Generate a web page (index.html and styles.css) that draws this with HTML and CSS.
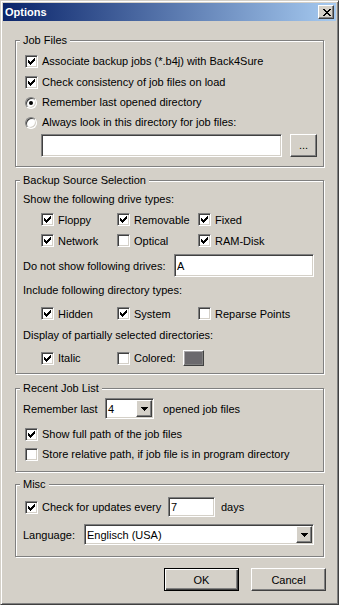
FILE: index.html
```html
<!DOCTYPE html>
<html lang="en">
<head>
    <meta charset="UTF-8">
    <title>Options</title>
    <link rel="stylesheet" href="styles.css">
</head>
<body>
    <div class="window">
        <!-- Title Bar -->
        <div class="titlebar">
            <span class="title">Options</span>
            <span class="close-btn">
                <svg width="8" height="7" viewBox="0 0 8 7"><path d="M0 0h2v1H0zM6 0h2v1H6zM1 1h2v1H1zM5 1h2v1H5zM2 2h4v1H2zM3 3h2v1H3zM2 4h4v1H2zM1 5h2v1H1zM5 5h2v1H5zM0 6h2v1H0zM6 6h2v1H6z" fill="#000"/></svg>
            </span>
        </div>

        <div class="client">
            <!-- Job Files -->
            <div class="group g-job">
                <span class="legend">Job Files</span>
                <div class="row">
                    <span class="check"><svg width="11" height="11" viewBox="1 1 11 11"><path d="M3 5h1v1h1v1h1v-1h1v-1h1v-1h1v-1h1v3h-1v1h-1v1h-1v1h-1v1h-1v-1h-1v-1h-1z"/></svg></span>
                    <span>Associate backup jobs (*.b4j) with Back4Sure</span>
                </div>
                <div class="row mt8">
                    <span class="check"><svg width="11" height="11" viewBox="1 1 11 11"><path d="M3 5h1v1h1v1h1v-1h1v-1h1v-1h1v-1h1v3h-1v1h-1v1h-1v1h-1v1h-1v-1h-1v-1h-1z"/></svg></span>
                    <span>Check consistency of job files on load</span>
                </div>
                <div class="row mt7">
                    <span class="radio on"></span>
                    <span>Remember last opened directory</span>
                </div>
                <div class="row mt7">
                    <span class="radio"></span>
                    <span>Always look in this directory for job files:</span>
                </div>
                <div class="dir-row">
                    <span class="edit dir-edit"></span>
                    <span class="btn dots">...</span>
                </div>
            </div>

            <!-- Backup Source Selection -->
            <div class="group g-src">
                <span class="legend">Backup Source Selection</span>
                <div class="text">Show the following drive types:</div>
                <div class="opt-grid mt7">
                    <div class="cell"><span class="check"><svg width="11" height="11" viewBox="1 1 11 11"><path d="M3 5h1v1h1v1h1v-1h1v-1h1v-1h1v-1h1v3h-1v1h-1v1h-1v1h-1v1h-1v-1h-1v-1h-1z"/></svg></span>Floppy</div>
                    <div class="cell"><span class="check"><svg width="11" height="11" viewBox="1 1 11 11"><path d="M3 5h1v1h1v1h1v-1h1v-1h1v-1h1v-1h1v3h-1v1h-1v1h-1v1h-1v1h-1v-1h-1v-1h-1z"/></svg></span>Removable</div>
                    <div class="cell"><span class="check"><svg width="11" height="11" viewBox="1 1 11 11"><path d="M3 5h1v1h1v1h1v-1h1v-1h1v-1h1v-1h1v3h-1v1h-1v1h-1v1h-1v1h-1v-1h-1v-1h-1z"/></svg></span>Fixed</div>
                    <div class="cell"><span class="check"><svg width="11" height="11" viewBox="1 1 11 11"><path d="M3 5h1v1h1v1h1v-1h1v-1h1v-1h1v-1h1v3h-1v1h-1v1h-1v1h-1v1h-1v-1h-1v-1h-1z"/></svg></span>Network</div>
                    <div class="cell"><span class="check"></span>Optical</div>
                    <div class="cell"><span class="check"><svg width="11" height="11" viewBox="1 1 11 11"><path d="M3 5h1v1h1v1h1v-1h1v-1h1v-1h1v-1h1v3h-1v1h-1v1h-1v1h-1v1h-1v-1h-1v-1h-1z"/></svg></span>RAM-Disk</div>
                </div>
                <div class="field-row mt7">
                    <span class="field-label w151">Do not show following drives:</span>
                    <span class="edit drive-edit">A</span>
                </div>
                <div class="text mt7">Include following directory types:</div>
                <div class="opt-grid mt10">
                    <div class="cell"><span class="check"><svg width="11" height="11" viewBox="1 1 11 11"><path d="M3 5h1v1h1v1h1v-1h1v-1h1v-1h1v-1h1v3h-1v1h-1v1h-1v1h-1v1h-1v-1h-1v-1h-1z"/></svg></span>Hidden</div>
                    <div class="cell"><span class="check"><svg width="11" height="11" viewBox="1 1 11 11"><path d="M3 5h1v1h1v1h1v-1h1v-1h1v-1h1v-1h1v3h-1v1h-1v1h-1v1h-1v1h-1v-1h-1v-1h-1z"/></svg></span>System</div>
                    <div class="cell"><span class="check"></span>Reparse Points</div>
                </div>
                <div class="text mt9">Display of partially selected directories:</div>
                <div class="opt-grid tall mt8">
                    <div class="cell"><span class="check"><svg width="11" height="11" viewBox="1 1 11 11"><path d="M3 5h1v1h1v1h1v-1h1v-1h1v-1h1v-1h1v3h-1v1h-1v1h-1v1h-1v1h-1v-1h-1v-1h-1z"/></svg></span>Italic</div>
                    <div class="cell span2"><span class="check"></span><span class="w49">Colored:</span><span class="swatch"></span></div>
                </div>
            </div>

            <!-- Recent Job List -->
            <div class="group g-recent">
                <span class="legend">Recent Job List</span>
                <div class="field-row">
                    <span class="field-label w82">Remember last</span>
                    <span class="combo count-combo">
                        <span class="val">4</span>
                        <span class="btn drop"><svg width="7" height="4" viewBox="0 0 7 4"><path d="M0 0h7v1h-1v1h-1v1h-1v1h-1v-1h-1v-1h-1v-1h-1z"/></svg></span>
                    </span>
                    <span class="after">opened job files</span>
                </div>
                <div class="row mt9">
                    <span class="check"><svg width="11" height="11" viewBox="1 1 11 11"><path d="M3 5h1v1h1v1h1v-1h1v-1h1v-1h1v-1h1v3h-1v1h-1v1h-1v1h-1v1h-1v-1h-1v-1h-1z"/></svg></span>
                    <span>Show full path of the job files</span>
                </div>
                <div class="row mt7">
                    <span class="check"></span>
                    <span>Store relative path, if job file is in program directory</span>
                </div>
            </div>

            <!-- Misc -->
            <div class="group g-misc">
                <span class="legend">Misc</span>
                <div class="field-row">
                    <span class="row w145">
                        <span class="check"><svg width="11" height="11" viewBox="1 1 11 11"><path d="M3 5h1v1h1v1h1v-1h1v-1h1v-1h1v-1h1v3h-1v1h-1v1h-1v1h-1v1h-1v-1h-1v-1h-1z"/></svg></span>
                        <span>Check for updates every</span>
                    </span>
                    <span class="edit days-edit">7</span>
                    <span class="days">days</span>
                </div>
                <div class="field-row mt7">
                    <span class="field-label w61">Language:</span>
                    <span class="combo lang-combo">
                        <span class="val">Englisch (USA)</span>
                        <span class="btn drop"><svg width="7" height="4" viewBox="0 0 7 4"><path d="M0 0h7v1h-1v1h-1v1h-1v1h-1v-1h-1v-1h-1v-1h-1z"/></svg></span>
                    </span>
                </div>
            </div>

            <!-- Dialog Buttons -->
            <div class="buttons">
                <span class="btn push default">OK</span>
                <span class="btn push">Cancel</span>
            </div>
        </div>
    </div>
</body>
</html>
```

FILE: styles.css
```css
/* Global Styles */
* {
    box-sizing: border-box;
}

body {
    margin: 0;
    font-family: "Liberation Sans", Arial, sans-serif;
    font-size: 11px;
    color: #000;
    background: #d4d0c8;
}

/* Window Frame */
.window {
    width: 339px;
    height: 605px;
    background: #d4d0c8;
    border: 1px solid;
    border-color: #d4d0c8 #404040 #404040 #d4d0c8;
    box-shadow: inset 1px 1px #fff, inset -1px -1px #808080;
    padding: 2px;
}

.titlebar {
    height: 18px;
    display: flex;
    align-items: center;
    justify-content: space-between;
    padding: 0 2px 0 2px;
    background: linear-gradient(to right, #0a246a, #a6caf0);
}

.title {
    color: #fff;
    font-weight: bold;
}

.close-btn {
    width: 16px;
    height: 14px;
    display: flex;
    align-items: center;
    justify-content: center;
    padding-left: 1px;
    background: #d4d0c8;
    border: 1px solid;
    border-color: #fff #404040 #404040 #fff;
    box-shadow: inset -1px -1px #808080;
}

.close-btn svg {
    display: block;
}

.client {
    padding: 19px 10px 0 12px;
}

/* Group Boxes */
.group {
    position: relative;
    width: 309px;
    border: 1px solid #808080;
    box-shadow: inset 1px 1px #fff, 1px 1px #fff;
    padding: 0 0 0 7px;
}

.legend {
    position: absolute;
    top: -7px;
    left: 4px;
    padding: 0 3px;
    line-height: 13px;
    background: #d4d0c8;
}

.g-job {
    height: 127px;
    padding-top: 14px;
}

.g-src {
    height: 194px;
    margin-top: 13px;
    padding-top: 12px;
}

.g-recent {
    height: 84px;
    margin-top: 14px;
    padding-top: 9px;
}

.g-misc {
    height: 73px;
    margin-top: 12px;
    padding-top: 12px;
}

.mt7 { margin-top: 7px; }
.mt8 { margin-top: 8px; }
.mt9 { margin-top: 9px; }
.mt10 { margin-top: 10px; }

/* Rows and Labels */
.text {
    height: 13px;
    line-height: 13px;
    white-space: nowrap;
}

.row {
    display: flex;
    align-items: center;
    height: 13px;
    line-height: 13px;
    margin-left: 2px;
    white-space: nowrap;
}

.opt-grid {
    display: grid;
    grid-template-columns: 76px 81px auto;
    grid-auto-rows: 13px;
    row-gap: 8px;
    margin-left: 18px;
}

.opt-grid.tall {
    grid-auto-rows: 16px;
}

.cell {
    display: flex;
    align-items: center;
    white-space: nowrap;
}

.span2 {
    grid-column: span 2;
}

.w49 { width: 49px; }
.w61 { width: 61px; }
.w82 { width: 82px; }
.w145 { width: 143px; flex: none; }
.w151 { width: 151px; }

.field-row {
    display: flex;
    align-items: center;
    white-space: nowrap;
}

.field-label {
    flex: none;
}

/* Check Boxes and Radios */
.check {
    width: 13px;
    height: 13px;
    flex: none;
    margin-right: 4px;
    background: #fff;
    border: 1px solid;
    border-color: #808080 #fff #fff #808080;
    box-shadow: inset 1px 1px #404040, inset -1px -1px #d4d0c8;
}

.check svg {
    display: block;
}

.radio {
    width: 12px;
    height: 12px;
    flex: none;
    margin-right: 5px;
    border-radius: 50%;
    background: #fff;
    border: 1px solid;
    border-color: #808080 #fff #fff #808080;
    box-shadow: inset 1px 1px #404040, inset -1px -1px #d4d0c8;
    display: flex;
    align-items: center;
    justify-content: center;
}

.radio.on::after {
    content: "";
    width: 4px;
    height: 4px;
    border-radius: 50%;
    background: #000;
}

/* Edits and Combos */
.edit {
    display: flex;
    align-items: center;
    flex: none;
    padding-left: 2px;
    background: #fff;
    border: 1px solid;
    border-color: #808080 #fff #fff #808080;
    box-shadow: inset 1px 1px #404040, inset -1px -1px #d4d0c8;
}

.dir-row {
    display: flex;
    gap: 8px;
    margin: 5px 0 0 18px;
}

.dir-edit {
    width: 241px;
    height: 23px;
}

.dots {
    width: 27px;
    height: 23px;
    padding-bottom: 2px;
}

.drive-edit {
    width: 140px;
    height: 23px;
}

.days-edit {
    width: 47px;
    height: 20px;
}

.days {
    margin-left: 6px;
}

.combo {
    display: flex;
    flex: none;
    height: 21px;
    padding: 1px;
    background: #fff;
    border: 1px solid;
    border-color: #808080 #fff #fff #808080;
    box-shadow: inset 1px 1px #404040, inset -1px -1px #d4d0c8;
}

.combo .val {
    flex: 1;
    display: flex;
    align-items: center;
    padding-left: 1px;
}

.count-combo {
    width: 49px;
}

.lang-combo {
    width: 230px;
}

.after {
    margin-left: 9px;
}

/* Buttons */
.btn {
    display: flex;
    align-items: center;
    justify-content: center;
    flex: none;
    background: #d4d0c8;
    border: 1px solid;
    border-color: #fff #404040 #404040 #fff;
    box-shadow: inset -1px -1px #808080;
}

.drop {
    width: 16px;
}

.drop svg {
    display: block;
}

.swatch {
    width: 21px;
    height: 16px;
    flex: none;
    background: #6b696d;
    border: 1px solid;
    border-color: #fff #404040 #404040 #fff;
    box-shadow: inset -1px -1px #808080, inset 1px 1px #a8a6a8;
}

.buttons {
    display: flex;
    justify-content: flex-end;
    gap: 12px;
    margin-top: 11px;
}

.push {
    width: 75px;
    height: 23px;
}

.push.default {
    border-color: #000;
    box-shadow: inset 1px 1px #fff, inset -1px -1px #404040, inset -2px -2px #808080;
}
```
